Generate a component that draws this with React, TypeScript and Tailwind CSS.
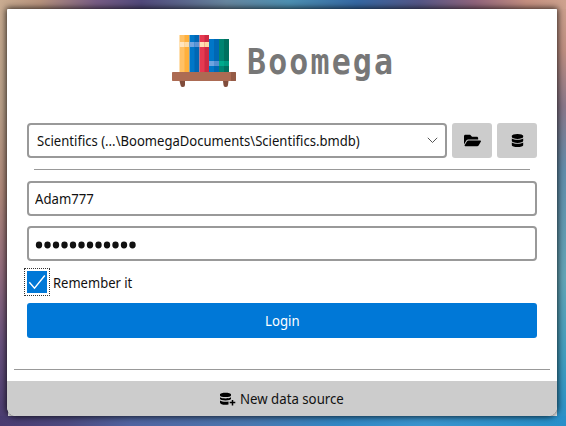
import { FaDatabase, FaFolderOpen } from "react-icons/fa";

function BookshelfLogo() {
  return (
    <svg width="64" height="54" viewBox="0 0 64 54" shapeRendering="geometricPrecision" aria-label="Bookshelf">
      <path fill="#ffc165" d="M7.5 1h6v38h-6z" />
      <path fill="#ffb03c" d="M12.5 1h5v38h-5z" />
      <path fill="#ffe5c0" d="M7.5 8h5v5h-5z" />
      <path fill="#ffdca7" d="M12.5 8h5v5h-5z" />
      <path fill="#0077c8" d="M17.5 1h6v38h-6z" />
      <path fill="#0067b4" d="M22.5 1h5v38h-5z" />
      <path fill="#73a5df" d="M17.5 8h5v5h-5z" />
      <path fill="#5d94d5" d="M22.5 8h5v5h-5z" />
      <path fill="#e63950" d="M27.5 1h6v38h-6z" />
      <path fill="#cd2a43" d="M32.5 1h4.5v38h-4.5z" />
      <path fill="#ffe0b5" d="M27.5 8h5v5h-5z" />
      <path fill="#ffdaa2" d="M32.5 8h4.5v5h-4.5z" />
      <path fill="#0077c8" d="M37 5h6v34h-6z" />
      <path fill="#0067b4" d="M42 5h5v34h-5z" />
      <path fill="#6ea4e0" d="M37 27h5v5h-5z" />
      <path fill="#558ed2" d="M42 27h5v5h-5z" />
      <path fill="#008472" d="M47 5h6v34h-6z" />
      <path fill="#00705f" d="M52 5h5v34h-5z" />
      <path fill="#00aa8c" d="M47 27h5v5h-5z" />
      <path fill="#009b81" d="M52 27h5v5h-5z" />
      <path fill="#804c3b" d="M7.500 47h5.500v4q0 2-2 2h-.5q-2 0-2-2zM51 47h5.500l-.5 4q0 2-2 2h-.5q-2 0-2-2z" />
      <rect y="38" width="64" height="9" rx=".7" fill="#ac6b53" />
      <path fill="#955b46" d="M59 38h4.300l.7.700v7.600l-.7.700H59z" />
    </svg>
  );
}

function Chevron() {
  return (
    <svg width="11" height="7" viewBox="0 0 11 7" fill="none" stroke="#555" strokeWidth="1">
      <path d="M.8.8 5.500 5.500 10.200.8" />
    </svg>
  );
}

function AddDatabaseIcon() {
  return (
    <svg width="16" height="14" viewBox="0 0 16 14">
      <path d="M0 2.300C0 .200 11 .200 11 2.300v1.200C11 5.600 0 5.600 0 3.500zM0 5.200c1.800 1.600 9.200 1.600 11 0v1.500C11 9 0 9 0 6.700zM0 8.500c1.500 1.300 6 1.500 8.500 1v2.900C5.500 13.200 0 12.900 0 10.500z" />
      <path d="M12.500 7.700v5.800M9.600 10.600h5.800" stroke="#ccc" strokeWidth="3.200" />
      <path d="M12.500 8v5.400M9.700 10.600h5.600" stroke="#000" strokeWidth="1.500" />
    </svg>
  );
}

export default function App() {
  return (
    <div className="h-[426px] w-[566px] overflow-hidden bg-[linear-gradient(90deg,#c9ac91_0%,#b7937d_7%,#775c84_17%,#51497b_25%,#67869f_40%,#4d90b2_51%,#3568a3_63%,#555787_74%,#91657c_84%,#c48f80_93%,#cda28e_100%),linear-gradient(90deg,#493b70_0%,#4c4a80_12%,#5064a0_23%,#4a78b0_44%,#3287c4_60%,#3a94ce_75%,#278fc9_100%),linear-gradient(180deg,#c9ac91_0%,#baa18a_25%,#b18a7b_45%,#956e7e_63%,#69527e_81%,#493b70_100%),linear-gradient(180deg,#cda28e_0%,#bd8e81_12%,#887789_25%,#628dab_40%,#63a5b7_65%,#419dbf_84%,#278fc9_100%)] bg-[length:100%_9px,100%_10px,8px_100%,9px_100%] bg-[position:top,bottom,left,right] bg-no-repeat px-[7px] pt-[9px] font-['Noto_Sans','Open_Sans',sans-serif] text-[14px] text-[#111]">
      <main className="flex h-[407px] w-[550px] flex-col overflow-hidden rounded-t-[1px] rounded-b-[9px] bg-white shadow-[0_0_6px_1px_rgba(0,0,0,0.75)]">
        <header className="flex h-[114px] pt-[25px] pl-[165px]">
          <BookshelfLogo />
          <h1 className="mt-[7px] ml-[10.500px] font-['DejaVu_Sans_Mono',monospace] text-[35.500px] leading-[41px] font-bold text-[#777]">
            <span className="inline-block origin-left scale-x-[.89] tracking-[2.400px]">Boomega</span>
          </h1>
        </header>

        <form className="flex flex-col px-[20px]">
          <div className="flex gap-[5px]">
            <button type="button" className="flex h-[35px] w-[420px] items-center justify-between rounded-[4px] border-2 border-[#999] bg-white pr-[7px] pl-[8px]">
              <span className="w-[324px] origin-left scale-x-[.934] text-left leading-5 whitespace-nowrap">Scientifics (...\BoomegaDocuments\Scientifics.bmdb)</span>
              <Chevron />
            </button>
            <button type="button" aria-label="Open folder" className="flex h-[35px] w-10 items-center justify-center rounded-[3px] bg-[#ccc] text-black">
              <FaFolderOpen size={17} />
            </button>
            <button type="button" aria-label="Data source" className="flex h-[35px] w-10 items-center justify-center rounded-[3px] bg-[#ccc] text-black">
              <FaDatabase size={13} />
            </button>
          </div>
          <div className="mx-[7px] mt-[11px] h-px bg-[#999]" />
          <div className="mt-[11px] flex h-[35px] items-center rounded-[4px] border-2 border-[#999] pl-[6px]">
            <span className="inline-block origin-left scale-x-[.94]">Adam777</span>
          </div>
          <div className="mt-[10px] flex h-[35px] items-center rounded-[4px] border-2 border-[#999] pt-[3px] pl-[6px]">
            <svg width="102" height="8" viewBox="0 0 102 8" fill="#111" aria-label="Password">
              {Array.from({ length: 12 }, (_, i) => (
                <ellipse key={i} cx={4 + i * 8.5} cy="4" rx="3.200" ry="3.400" />
              ))}
            </svg>
          </div>
          <label className="mt-[10px] flex h-[22px] items-center">
            <span className="h-[22px] w-5 bg-[#0078d7] outline-1 outline-offset-2 outline-[#333] outline-dotted">
              <svg width="20" height="22" viewBox="0 0 20 22" fill="none" stroke="white" strokeWidth="1.400">
                <path d="m2.300 11.300 5.200 5.900L17.800 4.500" />
              </svg>
            </span>
            <span className="ml-[6px] inline-block origin-left scale-x-[.93]">Remember it</span>
          </label>
          <button type="button" className="mt-[10px] h-[35px] rounded-[3px] bg-[#0078d7] text-white">
            <span className="inline-block scale-x-[.94]">Login</span>
          </button>
        </form>

        <footer className="mt-auto">
          <div className="mx-[7px] h-px bg-[#999]" />
          <button type="button" className="mt-[11px] flex h-[35px] w-full items-center bg-[#ccc] pl-[213px]">
            <AddDatabaseIcon />
            <span className="ml-1 inline-block origin-left scale-x-[.945]">New data source</span>
          </button>
        </footer>
      </main>
    </div>
  );
}
